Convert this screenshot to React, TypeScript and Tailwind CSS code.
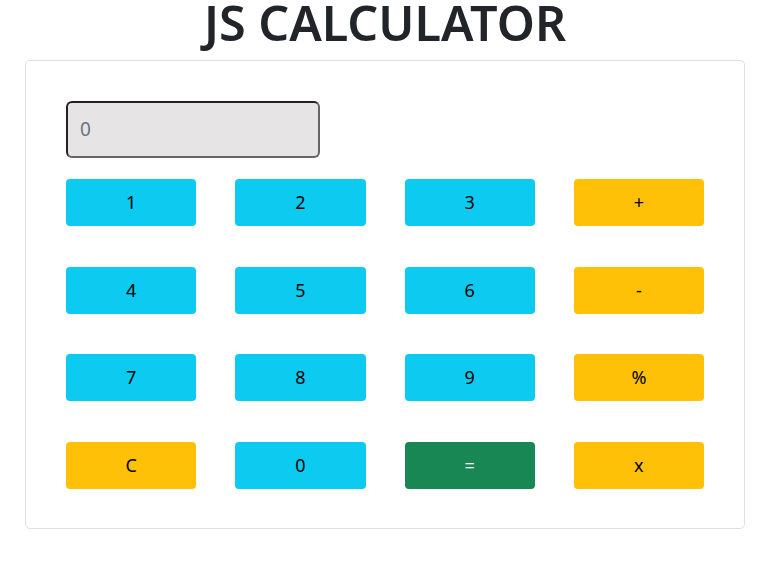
import React from "react";

const keys: { label: string; color: string }[] = [
  { label: "1", color: "bg-[#0dcaf0] text-black" },
  { label: "2", color: "bg-[#0dcaf0] text-black" },
  { label: "3", color: "bg-[#0dcaf0] text-black" },
  { label: "+", color: "bg-[#ffc107] text-black" },
  { label: "4", color: "bg-[#0dcaf0] text-black" },
  { label: "5", color: "bg-[#0dcaf0] text-black" },
  { label: "6", color: "bg-[#0dcaf0] text-black" },
  { label: "-", color: "bg-[#ffc107] text-black" },
  { label: "7", color: "bg-[#0dcaf0] text-black" },
  { label: "8", color: "bg-[#0dcaf0] text-black" },
  { label: "9", color: "bg-[#0dcaf0] text-black" },
  { label: "%", color: "bg-[#ffc107] text-black" },
  { label: "C", color: "bg-[#ffc107] text-black" },
  { label: "0", color: "bg-[#0dcaf0] text-black" },
  { label: "=", color: "bg-[#198754] text-white" },
  { label: "x", color: "bg-[#ffc107] text-black" },
];

export default function App() {
  return (
    <div className="min-h-[561px] w-[779px] bg-white font-['Noto_Sans','Open_Sans',sans-serif] text-[#212529]">
      <div className="ml-[25px] w-[720px]">
        <h1 className="text-center text-[48.5px] font-semibold leading-[44px] text-[#212529]">
          JS CALCULATOR
        </h1>
        <div className="mt-[16px] rounded-[5px] border border-[#dee2e6] px-[40px] pt-[40px] pb-[39px]">
          <div className="flex h-[57px] w-[254px] items-center rounded-[6px] border-2 border-t-[#222] border-l-[#222] border-r-[#666] border-b-[#666] bg-[#e6e4e5] pl-[12px] text-[19px] text-[#6c757d]">
            0
          </div>
          <div className="mt-[21px] grid grid-cols-4 gap-x-[39px] gap-y-[40.5px]">
            {keys.map((k) => (
              <button
                key={k.label}
                className={`flex h-[47px] items-center justify-center rounded-[4px] text-[18px] ${k.color}`}
              >
                {k.label}
              </button>
            ))}
          </div>
        </div>
      </div>
    </div>
  );
}
